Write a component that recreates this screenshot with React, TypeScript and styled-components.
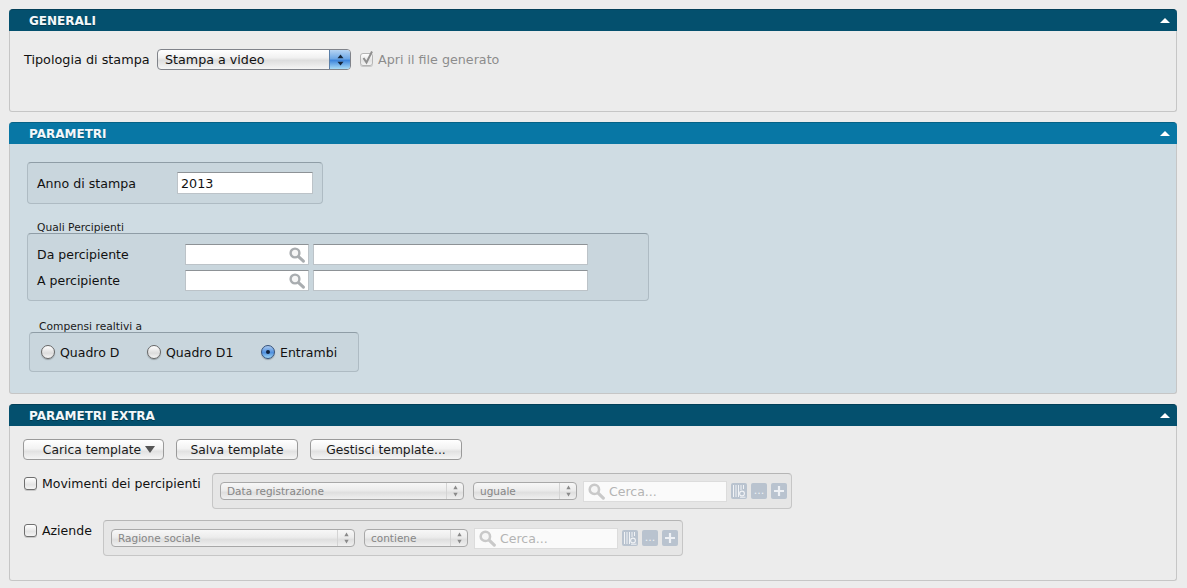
import styled, { createGlobalStyle } from "styled-components";

const GlobalStyle = createGlobalStyle`
  html, body {
    margin: 0;
    padding: 0;
    background: #ececec;
  }
  body {
    font-family: "DejaVu Sans", "Liberation Sans", sans-serif;
    font-size: 12px;
    color: #111;
  }
`;

export default function App() {
  return (
    <Page>
      <GlobalStyle />
      <Panel>
        <PanelHeader $tone="dark">
          <PanelTitle>GENERALI</PanelTitle>
          <CollapseArrow />
        </PanelHeader>
        <GeneraliBody>
          <FieldLabel>Tipologia di stampa</FieldLabel>
          <BlueSelect>
            <span>Stampa a video</span>
            <BlueStepper>
              <StepperGlyph color="#16263a" width={7} />
            </BlueStepper>
          </BlueSelect>
          <DisabledCheck>
            <CheckBox $disabled>
              <CheckMark />
            </CheckBox>
            <DisabledText>Apri il file generato</DisabledText>
          </DisabledCheck>
        </GeneraliBody>
      </Panel>

      <Panel>
        <PanelHeader $tone="light">
          <PanelTitle>PARAMETRI</PanelTitle>
          <CollapseArrow />
        </PanelHeader>
        <ParametriBody>
          <AnnoGroup>
            <AnnoLabel>Anno di stampa</AnnoLabel>
            <TextInput $width={136} $height={22}>
              2013
            </TextInput>
          </AnnoGroup>

          <GroupCaption>Quali Percipienti</GroupCaption>
          <PercipientiGroup>
            <PercipienteRow label="Da percipiente" />
            <PercipienteRow label="A percipiente" />
          </PercipientiGroup>

          <CompensiCaption>Compensi realtivi a</CompensiCaption>
          <CompensiGroup>
            <RadioOption $width={106}>
              <Radio />
              Quadro D
            </RadioOption>
            <RadioOption $width={114}>
              <Radio />
              Quadro D1
            </RadioOption>
            <RadioOption>
              <Radio $checked />
              Entrambi
            </RadioOption>
          </CompensiGroup>
        </ParametriBody>
      </Panel>

      <section>
        <PanelHeader $tone="dark">
          <PanelTitle>PARAMETRI EXTRA</PanelTitle>
          <CollapseArrow />
        </PanelHeader>
        <ExtraBody>
          <ButtonRow>
            <PushButton $width={141} $indent={11}>
              Carica template
              <MenuCaret />
            </PushButton>
            <PushButton $width={122}>Salva template</PushButton>
            <PushButton $width={152}>Gestisci template...</PushButton>
          </ButtonRow>
          <FilterRow
            label="Movimenti dei percipienti"
            field="Data registrazione"
            op="uguale"
            labelWidth={175}
            top={13}
          />
          <FilterRow
            label="Aziende"
            field="Ragione sociale"
            op="contiene"
            labelWidth={66}
            top={11}
          />
        </ExtraBody>
      </section>
    </Page>
  );
}

function PercipienteRow({ label }: { label: string }) {
  return (
    <PercipienteLine>
      <PercipienteLabel>{label}</PercipienteLabel>
      <TextInput $width={124} $height={21} $between>
        <span />
        <SearchGlyph size={16} color="#a9adb0" />
      </TextInput>
      <TextInput $width={275} $height={21} />
    </PercipienteLine>
  );
}

interface FilterRowProps {
  label: string;
  field: string;
  op: string;
  labelWidth: number;
  top: number;
}

function FilterRow({ label, field, op, labelWidth, top }: FilterRowProps) {
  return (
    <FilterLine $top={top}>
      <FilterCheck $width={labelWidth}>
        <CheckBox />
        {label}
      </FilterCheck>
      <FilterGroup>
        <MiniSelect $width={244}>
          <span>{field}</span>
          <MiniStepper>
            <StepperGlyph color="#8a8a8a" width={5} />
          </MiniStepper>
        </MiniSelect>
        <MiniSelect $width={104}>
          <span>{op}</span>
          <MiniStepper>
            <StepperGlyph color="#8a8a8a" width={5} />
          </MiniStepper>
        </MiniSelect>
        <SearchBox>
          <SearchGlyph size={17} color="#c9c9c9" />
          Cerca...
        </SearchBox>
        <ToolIcons>
          <ToolButton>
            <ColumnsGlyph />
          </ToolButton>
          <ToolButton>
            <DotsLabel>...</DotsLabel>
          </ToolButton>
          <ToolButton>
            <PlusGlyph />
          </ToolButton>
        </ToolIcons>
      </FilterGroup>
    </FilterLine>
  );
}

function StepperGlyph({ color, width }: { color: string; width: number }) {
  return (
    <svg width={width} height="12" viewBox="0 0 7 13" preserveAspectRatio="none">
      <path d="M3.5 0.5 L6.5 4.5 L0.5 4.5 Z" fill={color} />
      <path d="M3.5 12.5 L6.5 8.5 L0.5 8.5 Z" fill={color} />
    </svg>
  );
}

function CheckMark() {
  return (
    <CheckSvg width="15" height="16" viewBox="0 0 15 16">
      <path
        d="M3.5 8 L6.5 12.5 L12 1.5"
        fill="none"
        stroke="#8f8f8f"
        strokeWidth="2"
      />
    </CheckSvg>
  );
}

function SearchGlyph({ size, color }: { size: number; color: string }) {
  return (
    <svg width={size} height={size} viewBox="0 0 16 16">
      <circle cx="6" cy="6" r="4.4" fill="#f6f6f6" stroke={color} strokeWidth="2.4" />
      <path d="M9.8 9.8 L14.4 14.2" stroke={color} strokeWidth="3" strokeLinecap="round" />
    </svg>
  );
}

function ColumnsGlyph() {
  return (
    <svg width="16" height="16" viewBox="0 0 16 16">
      <path
        d="M2.5 2 V14 M5 2 V14 M7.5 2 V14 M10 2 V7 M12.5 2 V6"
        stroke="#f1f3f6"
        strokeWidth="1"
      />
      <circle cx="11" cy="10.5" r="2.4" fill="none" stroke="#f1f3f6" strokeWidth="1.1" />
      <path d="M9 14.2 H14.5" stroke="#f1f3f6" strokeWidth="1" />
    </svg>
  );
}

function PlusGlyph() {
  return (
    <svg width="16" height="16" viewBox="0 0 16 16">
      <path d="M8 3 V13 M3 8 H13" stroke="#eef1f5" strokeWidth="2.2" />
    </svg>
  );
}

const Page = styled.div`
  width: 1168px;
  height: 579px;
  padding: 9px 0 0 9px;
  overflow: hidden;
`;

const Panel = styled.section`
  margin-bottom: 10px;
`;

const PanelHeader = styled.header<{ $tone: "dark" | "light" }>`
  height: 22px;
  box-sizing: border-box;
  display: flex;
  align-items: center;
  justify-content: space-between;
  padding: 0 7px 0 20px;
  border-radius: 4px 4px 0 0;
  background: ${(p) => (p.$tone === "dark" ? "#04506e" : "#0877a5")};
  border-top: 1px solid ${(p) => (p.$tone === "dark" ? "#033f58" : "#066286")};
`;

const PanelTitle = styled.h2`
  margin: 0;
  font-size: 12px;
  font-weight: 700;
  color: #f4f8fa;
  text-shadow: 0 1px 0 rgba(0, 0, 0, 0.3);
`;

const CollapseArrow = styled.span`
  width: 0;
  height: 0;
  border-left: 5.5px solid transparent;
  border-right: 5.5px solid transparent;
  border-bottom: 5px solid #ffffff;
`;

const BodyBase = styled.div`
  box-sizing: border-box;
  border: 1px solid #c6c6c6;
  border-top: 0;
  border-radius: 0 0 3px 3px;
`;

const GeneraliBody = styled(BodyBase)`
  height: 81px;
  background: #ececec;
  display: flex;
  align-items: flex-start;
  padding: 18px 0 0 14px;
`;

const FieldLabel = styled.label`
  width: 133px;
  font-size: 12.8px;
  line-height: 21px;
  white-space: nowrap;
`;

const BlueSelect = styled.div`
  width: 194px;
  height: 21px;
  box-sizing: border-box;
  display: flex;
  align-items: center;
  justify-content: space-between;
  padding-left: 7px;
  border: 1px solid #80838a;
  border-radius: 4px;
  font-size: 12.7px;
  color: #111;
  overflow: hidden;
  background: linear-gradient(#ffffff 0%, #f1f1f1 40%, #dedede 55%, #f5f5f5 100%);
`;

const BlueStepper = styled.span`
  width: 20px;
  height: 100%;
  display: flex;
  align-items: center;
  justify-content: center;
  background: linear-gradient(#b6d4f3 0%, #6fa8e6 45%, #3f86dc 55%, #a9dcf7 100%);
  border-left: 1px solid #5a7fa8;
`;

const DisabledCheck = styled.div`
  display: flex;
  align-items: center;
  height: 21px;
  margin-left: 9px;
`;

const DisabledText = styled.span`
  font-size: 12.7px;
  color: #8c8c8c;
  margin-left: 5px;
`;

const CheckBox = styled.span<{ $disabled?: boolean }>`
  position: relative;
  display: inline-block;
  flex: none;
  width: 13px;
  height: 13px;
  box-sizing: border-box;
  border: 1px solid ${(p) => (p.$disabled ? "#b5b5b5" : "#6f6f6f")};
  border-radius: 3px;
  background: linear-gradient(#ffffff, #e4e4e4 60%, #f4f4f4);
  box-shadow: 0 1px 0 rgba(0, 0, 0, 0.15);
`;

const CheckSvg = styled.svg`
  position: absolute;
  left: -1px;
  top: -4px;
`;

const ParametriBody = styled(BodyBase)`
  height: 250px;
  background: #cfdce3;
  padding: 18px 0 0 17px;
`;

const GroupBox = styled.div`
  box-sizing: border-box;
  background: #c9d6dd;
  border: 1px solid #aebbc3;
  border-top-color: #8f9da6;
  border-radius: 4px;
`;

const AnnoGroup = styled(GroupBox)`
  width: 296px;
  height: 42px;
  display: flex;
  align-items: center;
  padding-left: 9px;
`;

const AnnoLabel = styled.span`
  width: 140px;
  font-size: 12.6px;
`;

const TextInput = styled.div<{ $width?: number; $height: number; $between?: boolean }>`
  width: ${(p) => p.$width}px;
  height: ${(p) => p.$height}px;
  box-sizing: border-box;
  display: flex;
  align-items: center;
  justify-content: ${(p) => (p.$between ? "space-between" : "flex-start")};
  padding: 0 3px;
  background: #ffffff;
  border: 1px solid #bcc3c8;
  border-top-color: #8d9296;
  font-size: 12.7px;
  color: #111;
`;

const GroupCaption = styled.div`
  font-size: 10.7px;
  line-height: 13px;
  color: #1a1a1a;
  margin: 17px 0 -1px 10px;
`;

const PercipientiGroup = styled(GroupBox)`
  width: 622px;
  height: 68px;
  padding: 10px 0 0 9px;
  display: flex;
  flex-direction: column;
  gap: 5px;
`;

const PercipienteLine = styled.div`
  display: flex;
  align-items: center;
  gap: 4px;
`;

const PercipienteLabel = styled.span`
  width: 144px;
  font-size: 12.5px;
`;

const CompensiCaption = styled(GroupCaption)`
  margin: 19px 0 -1px 12px;
`;

const CompensiGroup = styled(GroupBox)`
  width: 330px;
  height: 40px;
  margin-left: 2px;
  display: flex;
  align-items: center;
  padding-left: 11px;
`;

const RadioOption = styled.label<{ $width?: number }>`
  display: flex;
  align-items: center;
  gap: 5px;
  width: ${(p) => (p.$width ? `${p.$width}px` : "auto")};
  font-size: 12.5px;
`;

const Radio = styled.span<{ $checked?: boolean }>`
  width: 14px;
  height: 14px;
  flex: none;
  box-sizing: border-box;
  border-radius: 50%;
  display: flex;
  align-items: center;
  justify-content: center;
  border: 1px solid ${(p) => (p.$checked ? "#33507a" : "#666")};
  box-shadow: 0 1px 1px rgba(0, 0, 0, 0.25);
  background: ${(p) =>
    p.$checked
      ? "linear-gradient(#a9c8ee, #4f90de 55%, #9fd6f5)"
      : "linear-gradient(#ffffff, #dcdcdc 60%, #f6f6f6)"};

  &::after {
    content: "";
    width: 4px;
    height: 4px;
    border-radius: 50%;
    background: ${(p) => (p.$checked ? "#10233d" : "transparent")};
  }
`;

const ExtraBody = styled(BodyBase)`
  height: 155px;
  background: #ececec;
  padding: 13px 0 0 13px;
`;

const ButtonRow = styled.div`
  display: flex;
  gap: 12px;
`;

const PushButton = styled.button<{ $width: number; $indent?: number }>`
  width: ${(p) => p.$width}px;
  height: 21px;
  padding: 0 0 0 ${(p) => p.$indent ?? 0}px;
  box-sizing: border-box;
  display: flex;
  align-items: center;
  justify-content: center;
  gap: 4px;
  font-family: inherit;
  font-size: 12.3px;
  color: #1a1a1a;
  border: 1px solid #9a9a9a;
  border-radius: 4px;
  background: linear-gradient(#ffffff 0%, #f3f3f3 45%, #e2e2e2 60%, #f5f5f5 100%);
`;

const MenuCaret = styled.span`
  width: 0;
  height: 0;
  border-left: 5px solid transparent;
  border-right: 5px solid transparent;
  border-top: 7px solid #555;
`;

const FilterLine = styled.div<{ $top: number }>`
  display: flex;
  align-items: flex-start;
  margin-top: ${(p) => p.$top}px;
  margin-left: 1px;
`;

const FilterCheck = styled.label<{ $width: number }>`
  width: ${(p) => p.$width}px;
  height: 21px;
  margin-right: 13px;
  flex: none;
  display: flex;
  align-items: center;
  gap: 5px;
  font-size: 12.5px;
  white-space: nowrap;
  color: #111;
`;

const FilterGroup = styled.div`
  width: 580px;
  height: 36px;
  box-sizing: border-box;
  display: flex;
  align-items: center;
  gap: 9px;
  padding-left: 7px;
  background: #e6e6e6;
  border: 1px solid #c6c6c6;
  border-top-color: #b5b5b5;
  border-radius: 4px;
`;

const MiniSelect = styled.div<{ $width: number }>`
  width: ${(p) => p.$width}px;
  height: 18px;
  flex: none;
  box-sizing: border-box;
  display: flex;
  align-items: center;
  justify-content: space-between;
  padding-left: 6px;
  font-size: 10.5px;
  color: #868686;
  border: 1px solid #a8a8a8;
  border-radius: 4px;
  background: linear-gradient(#f7f7f7 0%, #ececec 45%, #dfdfdf 60%, #f0f0f0 100%);
`;

const MiniStepper = styled.span`
  width: 16px;
  height: 100%;
  display: flex;
  align-items: center;
  justify-content: center;
  border-left: 1px solid #d4d4d4;
`;

const SearchBox = styled.div`
  width: 144px;
  height: 21px;
  flex: none;
  box-sizing: border-box;
  margin-left: -3px;
  display: flex;
  align-items: center;
  gap: 4px;
  padding-left: 4px;
  font-size: 12.5px;
  color: #b4b4b4;
  background: #fafafa;
  border: 1px solid #dcdcdc;
`;

const ToolIcons = styled.div`
  display: flex;
  gap: 4px;
  margin-left: -5px;
`;

const ToolButton = styled.span`
  width: 16px;
  height: 16px;
  display: flex;
  align-items: center;
  justify-content: center;
  overflow: hidden;
  border-radius: 2px;
  background: #b9c3cf;
`;

const DotsLabel = styled.span`
  font-size: 11px;
  line-height: 16px;
  color: #eef1f5;
`;
